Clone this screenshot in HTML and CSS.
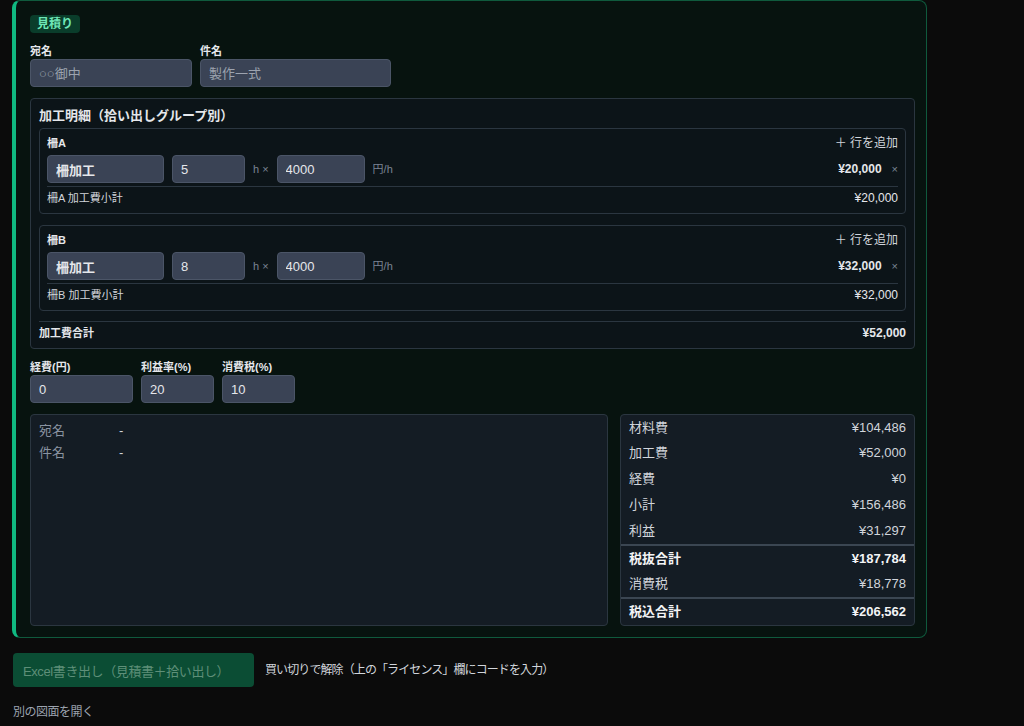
FILE: index.html
```html
<!DOCTYPE html>
<html lang="ja">
<head>
    <meta charset="UTF-8">
    <meta name="viewport" content="width=device-width, initial-scale=1.0">
    <title>見積り</title>
    <link rel="stylesheet" href="styles.css">
</head>
<body>

<div class="page">
    <!-- Estimate card -->
    <div class="card">
        <div class="card-head">
            <span class="badge">見積り</span>
        </div>

        <div class="fields">
            <div class="field">
                <label>宛名</label>
                <input class="input w-to" type="text" placeholder="○○御中">
            </div>
            <div class="field">
                <label>件名</label>
                <input class="input w-subject" type="text" placeholder="製作一式">
            </div>
        </div>

        <!-- Processing details per group -->
        <div class="section">
            <div class="section-title">加工明細（拾い出しグループ別）</div>

            <div class="group">
                <div class="group-head">
                    <span class="group-name">柵A</span>
                    <span class="add-row">＋ 行を追加</span>
                </div>
                <div class="line">
                    <input class="input w-name strong" type="text" value="柵加工">
                    <input class="input w-hours" type="text" value="5">
                    <span class="unit">h ×</span>
                    <input class="input w-rate" type="text" value="4000">
                    <span class="unit">円/h</span>
                    <span class="amount">¥20,000</span>
                    <span class="remove">×</span>
                </div>
                <div class="subtotal">
                    <span>柵A 加工費小計</span>
                    <span class="subtotal-value">¥20,000</span>
                </div>
            </div>

            <div class="group">
                <div class="group-head">
                    <span class="group-name">柵B</span>
                    <span class="add-row">＋ 行を追加</span>
                </div>
                <div class="line">
                    <input class="input w-name strong" type="text" value="柵加工">
                    <input class="input w-hours" type="text" value="8">
                    <span class="unit">h ×</span>
                    <input class="input w-rate" type="text" value="4000">
                    <span class="unit">円/h</span>
                    <span class="amount">¥32,000</span>
                    <span class="remove">×</span>
                </div>
                <div class="subtotal">
                    <span>柵B 加工費小計</span>
                    <span class="subtotal-value">¥32,000</span>
                </div>
            </div>

            <div class="total-row">
                <span>加工費合計</span>
                <span class="total-value">¥52,000</span>
            </div>
        </div>

        <!-- Rates -->
        <div class="fields rates">
            <div class="field">
                <label>経費(円)</label>
                <input class="input w-cost" type="text" value="0">
            </div>
            <div class="field">
                <label>利益率(%)</label>
                <input class="input w-rate-s" type="text" value="20">
            </div>
            <div class="field">
                <label>消費税(%)</label>
                <input class="input w-rate-s" type="text" value="10">
            </div>
        </div>

        <!-- Preview and summary -->
        <div class="bottom">
            <div class="preview">
                <div class="preview-row"><span class="preview-key">宛名</span><span>-</span></div>
                <div class="preview-row"><span class="preview-key">件名</span><span>-</span></div>
            </div>
            <div class="summary">
                <div class="sum-row"><span>材料費</span><span>¥104,486</span></div>
                <div class="sum-row"><span>加工費</span><span>¥52,000</span></div>
                <div class="sum-row"><span>経費</span><span>¥0</span></div>
                <div class="sum-row"><span>小計</span><span>¥156,486</span></div>
                <div class="sum-row"><span>利益</span><span>¥31,297</span></div>
                <div class="sum-row bold divided"><span>税抜合計</span><span>¥187,784</span></div>
                <div class="sum-row"><span>消費税</span><span>¥18,778</span></div>
                <div class="sum-row bold divided last"><span>税込合計</span><span>¥206,562</span></div>
            </div>
        </div>
    </div>

    <!-- Export -->
    <div class="export">
        <button class="export-btn" disabled>Excel書き出し（見積書＋拾い出し）</button>
        <span class="export-note">買い切りで解除（上の「ライセンス」欄にコードを入力）</span>
    </div>

    <div class="open-other">別の図面を開く</div>
</div>

</body>
</html>
```

FILE: styles.css
```css
/* Base page */
body {
    margin: 0;
    background-color: #0b0b0b;
    color: #e5e7eb;
    font-family: 'Liberation Sans', 'Noto Sans CJK JP', sans-serif;
    font-size: 13px;
    line-height: 16px;
}

.page {
    padding: 0 12px;
}

/* Main estimate card */
.card {
    width: 915px;
    box-sizing: border-box;
    background-color: #07130f;
    border: 1px solid #0f5a3d;
    border-left: 4px solid #10b981;
    border-radius: 8px;
    padding: 14px 11px 11px 14px;
}

.card-head {
    display: flex;
    height: 18px;
}

.badge {
    display: block;
    background-color: #0a3d2b;
    color: #6ee7b7;
    font-size: 12px;
    font-weight: bold;
    line-height: 18px;
    height: 18px;
    padding: 0 7px;
    border-radius: 4px;
}

/* Label + input fields */
.fields {
    display: flex;
    gap: 8px;
    margin-top: 11px;
}

.field {
    display: flex;
    flex-direction: column;
}

.field label {
    display: block;
    font-size: 11px;
    font-weight: bold;
    line-height: 14px;
    height: 14px;
    margin-bottom: 1px;
    color: #e5e7eb;
}

.input {
    box-sizing: border-box;
    height: 28px;
    background-color: #3a4355;
    border: 1px solid #4b5567;
    border-radius: 4px;
    color: #e5e7eb;
    font-family: inherit;
    font-size: 13px;
    padding: 0 8px;
    outline: none;
}

.input::placeholder {
    color: #9ca3af;
}

.input.strong {
    font-weight: bold;
}

.w-to { width: 162px; }
.w-subject { width: 191px; }
.w-name { width: 117px; }
.w-hours { width: 73px; }
.w-rate { width: 88px; }
.w-cost { width: 103px; }
.w-rate-s { width: 73px; }

/* Processing details section */
.section {
    margin-top: 11px;
    background-color: #0c1418;
    border: 1px solid #2b3640;
    border-radius: 4px;
    padding: 9px 8px 8px 8px;
}

.section-title {
    font-size: 13px;
    font-weight: bold;
    line-height: 16px;
    height: 16px;
    margin-bottom: 4px;
}

.group {
    border: 1px solid #2b3640;
    border-radius: 4px;
    padding: 7px 7px 8px 7px;
    margin-bottom: 11px;
}

.group + .group {
    margin-bottom: 10px;
}

.group-head {
    display: flex;
    justify-content: space-between;
    line-height: 14px;
    height: 14px;
}

.group-name {
    font-size: 11px;
    font-weight: bold;
}

.add-row {
    font-size: 12px;
    color: #d1d5db;
}

.line {
    display: flex;
    align-items: center;
    gap: 8px;
    height: 28px;
    margin-top: 5px;
    padding-bottom: 3px;
    border-bottom: 1px solid #2b3640;
}

.unit {
    font-size: 11px;
    color: #7b8494;
}

.amount {
    margin-left: auto;
    font-size: 12px;
    font-weight: bold;
}

.remove {
    font-size: 11px;
    color: #7b8494;
    margin-left: 2px;
}

.subtotal {
    display: flex;
    justify-content: space-between;
    font-size: 11px;
    line-height: 14px;
    height: 14px;
    margin-top: 4px;
    color: #d1d5db;
}

.subtotal-value {
    font-size: 12px;
    color: #e5e7eb;
}

.total-row {
    display: flex;
    justify-content: space-between;
    font-size: 11px;
    font-weight: bold;
    line-height: 14px;
    height: 14px;
    border-top: 1px solid #2b3640;
    padding-top: 4px;
}

.total-value {
    font-size: 12px;
}

.rates {
    margin-top: 11px;
}

/* Preview and summary */
.bottom {
    display: grid;
    grid-template-columns: 578px 295px;
    gap: 12px;
    margin-top: 11px;
}

.preview,
.summary {
    background-color: #141c24;
    border: 1px solid #2b3640;
    border-radius: 4px;
}

.preview {
    padding: 5px 8px;
}

.preview-row {
    display: flex;
    line-height: 22px;
    height: 22px;
    color: #d1d5db;
}

.preview-key {
    width: 80px;
    color: #8a93a1;
}

.sum-row {
    display: flex;
    justify-content: space-between;
    line-height: 26px;
    height: 26px;
    padding: 0 8px;
    color: #d1d5db;
}

.sum-row:first-child {
    height: 25px;
    line-height: 25px;
}

.sum-row.bold {
    font-weight: bold;
    color: #f3f4f6;
}

.sum-row.divided {
    border-top: 2px solid #3b4652;
    height: 25px;
    line-height: 25px;
}

.sum-row.last {
    height: 26px;
    line-height: 26px;
}

/* Export area */
.export {
    display: flex;
    align-items: center;
    gap: 11px;
    margin-top: 15px;
    padding-left: 1px;
}

.export-btn {
    width: 241px;
    height: 34px;
    background-color: #0b4d34;
    color: #5e8f78;
    border: none;
    border-radius: 4px;
    font-family: inherit;
    font-size: 13px;
    letter-spacing: -0.4px;
    text-align: left;
    padding: 0 0 0 10px;
}

.export-note {
    font-size: 12px;
    letter-spacing: -0.9px;
    color: #d1d5db;
}

.open-other {
    margin-top: 17px;
    padding-left: 1px;
    font-size: 12px;
    letter-spacing: -0.5px;
    line-height: 16px;
    color: #9ca3af;
}
```
